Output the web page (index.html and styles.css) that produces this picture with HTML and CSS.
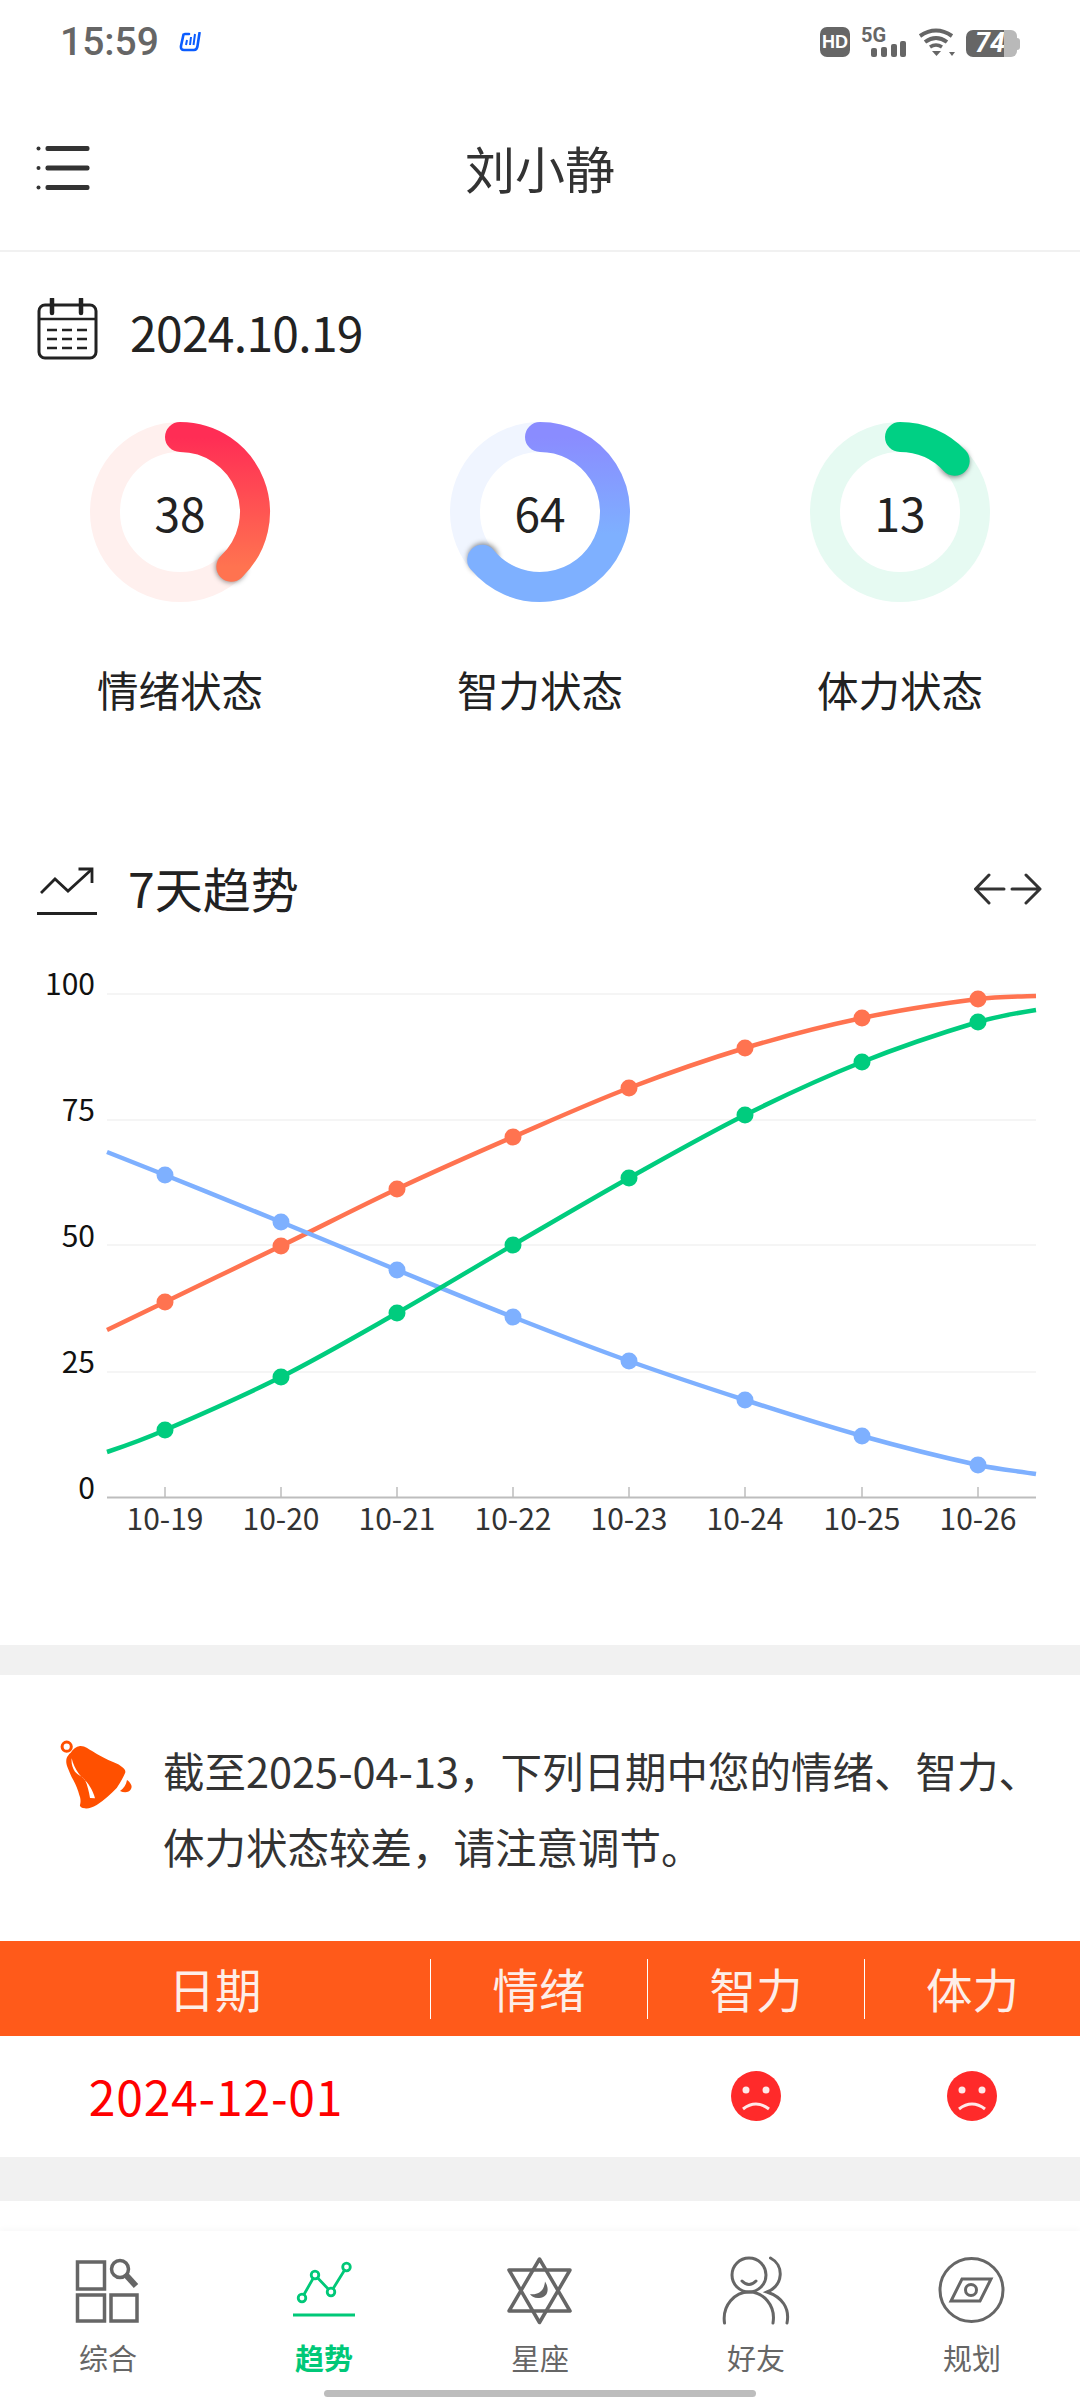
FILE: index.html
```html
<!DOCTYPE html>
<html lang="zh-CN">
<head>
<meta charset="utf-8">
<title>刘小静</title>
<link rel="stylesheet" href="styles.css">
</head>
<body>
<div class="page">
  <div class="statusbar">
    <div class="status-left">
      <span class="clock">15:59</span>
      <svg class="app-glyph" viewBox="0 0 22 20"><path d="M6 2H10M4.500 2.500L2 14Q1.500 18 5 18H15Q18 18 18.500 14L20.500 1" fill="none" stroke="#0a5cff" stroke-width="2.600" stroke-linecap="round"/><path d="M8 8L7 13M12 5L11 13M16 2L14.500 13" fill="none" stroke="#0a5cff" stroke-width="2"/></svg>
    </div>
    <div class="status-right">
      <span class="hd">HD</span>
      <div class="signal">
        <span class="signal-text">5G</span>
        <svg class="signal-bars" viewBox="0 0 46 30"><rect x="10" y="21" width="6" height="9" rx="2"/><rect x="20" y="20" width="6" height="10" rx="2"/><rect x="30" y="17" width="6" height="13" rx="2"/><rect x="39" y="14" width="6" height="16" rx="2"/></svg>
      </div>
      <svg class="wifi" viewBox="0 0 37 30"><path d="M2 9Q18 -2 34 9" fill="none" stroke="#666" stroke-width="4"/><path d="M7 15Q18 7 29 15" fill="none" stroke="#666" stroke-width="4"/><path d="M12 20Q18 16 24 20" fill="none" stroke="#666" stroke-width="3.500"/><path d="M14 24H23L18.500 29Z" fill="#666"/><path d="M31 25H37L34 29Z" fill="#666"/></svg>
      <div class="battery"><span class="bat-fill">74</span><span class="bat-rest"></span><span class="bat-nub"></span></div>
    </div>
  </div>

  <header class="appbar">
    <svg class="menu-icon" viewBox="0 0 54 44"><g fill="#333"><circle cx="2.500" cy="2.500" r="2"/><circle cx="2.500" cy="22" r="2"/><circle cx="2.500" cy="41.500" r="2"/><rect x="9.500" y="0" width="44" height="5" rx="2"/><rect x="9.500" y="19.500" width="44" height="5" rx="2"/><rect x="9.500" y="39" width="44" height="5" rx="2"/></g></svg>
    <h1 class="title">刘小静</h1>
  </header>

  <section class="date-row">
    <svg class="head-icon" viewBox="0 0 62 62"><g fill="none" stroke="#222" stroke-width="3"><rect x="2" y="7" width="57" height="53" rx="6"/><path d="M2 21H59" stroke-width="2.500"/><path d="M15 1V15M44 1V15" stroke-width="4.500" stroke-linecap="round"/><path d="M10 32H20M25 32H35M40 32H50M10 41H20M25 41H35M40 41H50M10 50H20M25 50H35M40 50H50" stroke-width="2.500"/></g></svg>
    <span class="date-text">2024.10.19</span>
  </section>

  <section class="rings">
    <div class="ring-item">
      <div class="ring">
        <svg class="ring-svg" viewBox="0 0 180 180">
          <defs>
            <linearGradient id="g1" x1="0" y1="0" x2="0" y2="1"><stop offset="0" stop-color="#ff2d55"/><stop offset="1" stop-color="#ff7350"/></linearGradient>
            <linearGradient id="g2" x1="0" y1="0" x2="0" y2="1"><stop offset="0" stop-color="#8a8cff"/><stop offset=".65" stop-color="#7eb0ff"/><stop offset="1" stop-color="#7eb0ff"/></linearGradient>
            <filter id="blur" x="-50%" y="-50%" width="200%" height="200%"><feGaussianBlur stdDeviation="2.500"/></filter>
          </defs>
          <circle cx="90" cy="90" r="75" class="track track-red"/>
          <circle cx="141" cy="145" r="15.500" class="cap-shadow" filter="url(#blur)"/>
          <path d="M90 15A75 75 0 0 1 141.300 144.700" class="arc" stroke="url(#g1)"/>
        </svg>
        <span class="ring-num">38</span>
      </div>
      <div class="ring-label">情绪状态</div>
    </div>
    <div class="ring-item">
      <div class="ring">
        <svg class="ring-svg" viewBox="0 0 180 180">
          <circle cx="90" cy="90" r="75" class="track track-blue"/>
          <circle cx="33" cy="136.500" r="15.500" class="cap-shadow" filter="url(#blur)"/>
          <path d="M90 15A75 75 0 1 1 32.200 137.800" class="arc" stroke="url(#g2)"/>
        </svg>
        <span class="ring-num">64</span>
      </div>
      <div class="ring-label">智力状态</div>
    </div>
    <div class="ring-item">
      <div class="ring">
        <svg class="ring-svg" viewBox="0 0 180 180">
          <circle cx="90" cy="90" r="75" class="track track-green"/>
          <circle cx="144" cy="40" r="15.500" class="cap-shadow" filter="url(#blur)"/>
          <path d="M90 15A75 75 0 0 1 144.700 38.700" class="arc arc-green"/>
        </svg>
        <span class="ring-num">13</span>
      </div>
      <div class="ring-label">体力状态</div>
    </div>
  </section>

  <section class="trend-row">
    <div class="trend-left">
      <svg class="trend-icon" viewBox="36 860 62 52"><g fill="none" stroke="#222" stroke-width="2.800"><path d="M41 889L55 875L68 887L91 866"/><path d="M78.500 865H92V879"/><path d="M37 909.500H97" stroke-width="3"/></g></svg>
      <span class="trend-text">7天趋势</span>
    </div>
    <svg class="swap-icon" viewBox="974 867 68 32"><g fill="none" stroke="#333" stroke-width="3" stroke-linecap="round" stroke-linejoin="round"><path d="M989 869L975.500 883L989 897M977 883H1004"/><path d="M1026 869L1040 883L1026 897M1012 883H1038"/></g></svg>
  </section>

  <svg class="chart" viewBox="0 918 1080 727">
    <g class="grid">
      <path d="M107 994H1036M107 1120H1036M107 1245H1036M107 1372H1036"/>
    </g>
    <g class="axis">
      <path d="M107 1497.500H1036"/>
      <path d="M165 1487V1497M281 1487V1497M397 1487V1497M513 1487V1497M629 1487V1497M745 1487V1497M862 1487V1497M978 1487V1497"/>
    </g>
    <g class="y-labels">
      <text x="95" y="995">100</text>
      <text x="95" y="1121">75</text>
      <text x="95" y="1247">50</text>
      <text x="95" y="1373">25</text>
      <text x="95" y="1499">0</text>
    </g>
    <g class="x-labels">
      <text x="165" y="1530">10-19</text>
      <text x="281" y="1530">10-20</text>
      <text x="397" y="1530">10-21</text>
      <text x="513" y="1530">10-22</text>
      <text x="629" y="1530">10-23</text>
      <text x="745" y="1530">10-24</text>
      <text x="862" y="1530">10-25</text>
      <text x="978" y="1530">10-26</text>
    </g>
    <path class="line line-red" d="M107 1330L165 1302C203.700 1283.300 242.300 1264.800 281 1246S358.300 1207.200 397 1189S474.300 1153.800 513 1137S590.300 1102.800 629 1088S706.300 1059.700 745 1048S823.300 1026.200 862 1018S939.300 1003.900 978 999C997 996.600 1017 996.500 1036 996"/>
    <g class="dots-red"><circle cx="165" cy="1302" r="8.500"/><circle cx="281" cy="1246" r="8.500"/><circle cx="397" cy="1189" r="8.500"/><circle cx="513" cy="1137" r="8.500"/><circle cx="629" cy="1088" r="8.500"/><circle cx="745" cy="1048" r="8.500"/><circle cx="862" cy="1018" r="8.500"/><circle cx="978" cy="999" r="8.500"/></g>
    <path class="line line-blue" d="M107 1152L165 1175C203.700 1190.600 242.300 1206.200 281 1222S358.300 1254.200 397 1270S474.300 1301.800 513 1317S590.300 1347.200 629 1361S706.300 1387.500 745 1400S823.300 1425.200 862 1436S939.300 1456.500 978 1465C997 1469.100 1017 1471 1036 1474"/>
    <g class="dots-blue"><circle cx="165" cy="1175" r="8.500"/><circle cx="281" cy="1222" r="8.500"/><circle cx="397" cy="1270" r="8.500"/><circle cx="513" cy="1317" r="8.500"/><circle cx="629" cy="1361" r="8.500"/><circle cx="745" cy="1400" r="8.500"/><circle cx="862" cy="1436" r="8.500"/><circle cx="978" cy="1465" r="8.500"/></g>
    <path class="line line-green" d="M107 1452Q140 1441 165 1430C203.700 1413.300 242.300 1396.500 281 1377S358.300 1335 397 1313S474.300 1267.500 513 1245S590.300 1199.700 629 1178S706.300 1134.300 745 1115S823.300 1077.500 862 1062S939.300 1033.600 978 1022C997 1016.300 1017 1013 1036 1010"/>
    <g class="dots-green"><circle cx="165" cy="1430" r="8.500"/><circle cx="281" cy="1377" r="8.500"/><circle cx="397" cy="1313" r="8.500"/><circle cx="513" cy="1245" r="8.500"/><circle cx="629" cy="1178" r="8.500"/><circle cx="745" cy="1115" r="8.500"/><circle cx="862" cy="1062" r="8.500"/><circle cx="978" cy="1022" r="8.500"/></g>
  </svg>

  <div class="band band-a"></div>

  <section class="notice">
    <svg class="bell" viewBox="60 1740 74 70">
      <circle cx="66.700" cy="1746.700" r="4.600" fill="none" stroke="#ff5000" stroke-width="3"/>
      <path fill="#ff5000" d="M70.700 1752.700C73 1749 76 1746.500 80 1746C85 1745.700 89 1749.500 93.300 1751.700C98 1754.500 103 1757.500 108.300 1760C113 1762 118 1763.500 121.700 1766.700C125 1769 126 1771 125 1773.300C123 1778 120 1783 116.700 1788C111 1794 104 1800.500 96.700 1805C92 1807.500 88 1809 85 1808.300C81 1808 79.500 1806 80 1805C81 1801 80.500 1798 79.300 1795C78 1790 76 1785 73.300 1780C71 1776 69 1771 67.300 1766.700C66 1763 66 1760.500 66.700 1758C67.500 1756 69 1754 70.700 1752.700Z"/>
      <path fill="#fff" d="M71.700 1758.300C73 1764 75.500 1769 78.300 1773C82 1778 87 1781 90 1786.700C92 1790 94 1794 95 1798.300L90 1798C89 1792 87.500 1785 85 1780C82 1776 78 1775 75 1771.700C72.500 1768 71 1763 71.700 1758.300Z"/>
      <path fill="#ff5000" d="M127 1780C130 1782 133 1786 131 1789C129 1793 124 1793 120 1791C124 1788 126 1785 127 1780Z"/>
    </svg>
    <p class="notice-text">截至2025-04-13，下列日期中您的情绪、智力、<br>体力状态较差，请注意调节。</p>
  </section>

  <div class="table-head">
    <div class="th">日期</div>
    <div class="th th-rule">情绪</div>
    <div class="th th-rule">智力</div>
    <div class="th th-rule">体力</div>
  </div>
  <div class="table-row">
    <div class="td-date">2024-12-01</div>
    <div class="td"></div>
    <div class="td"><svg class="face" viewBox="-25 -25 50 50"><circle r="25" fill="#ff2a2a"/><circle cx="-10" cy="-6" r="3.500" fill="#ffe9e9"/><circle cx="10" cy="-6" r="3.500" fill="#ffe9e9"/><path d="M-13 13Q0 3 13 13" fill="none" stroke="#ffe9e9" stroke-width="3"/></svg></div>
    <div class="td"><svg class="face" viewBox="-25 -25 50 50"><circle r="25" fill="#ff2a2a"/><circle cx="-10" cy="-6" r="3.500" fill="#ffe9e9"/><circle cx="10" cy="-6" r="3.500" fill="#ffe9e9"/><path d="M-13 13Q0 3 13 13" fill="none" stroke="#ffe9e9" stroke-width="3"/></svg></div>
  </div>

  <div class="band band-b"></div>
  <div class="filler"></div>

  <nav class="tabbar">
    <div class="tab">
      <svg class="tab-icon" viewBox="68 2255 80 72"><g fill="none" stroke="#666" stroke-width="3.500"><rect x="77.500" y="2262" width="27" height="27"/><rect x="77.500" y="2295" width="27" height="26"/><rect x="111" y="2295" width="26" height="26"/><circle cx="120" cy="2269" r="8.500"/></g><path d="M126 2275L136 2286" stroke="#666" stroke-width="6"/></svg>
      <span class="tab-label">综合</span>
    </div>
    <div class="tab">
      <svg class="tab-icon" viewBox="284 2255 80 72"><g fill="#fff" stroke="#00c878" stroke-width="2.800"><path d="M302 2298L315 2275L331 2292L346.500 2267" fill="none"/><circle cx="302" cy="2298" r="3.800"/><circle cx="315" cy="2275" r="3.800"/><circle cx="331" cy="2292" r="3.800"/><circle cx="346.500" cy="2267" r="3.800"/><path d="M293 2315H355" stroke-width="3.200"/></g></svg>
      <span class="tab-label tab-active">趋势</span>
    </div>
    <div class="tab">
      <svg class="tab-icon" viewBox="500 2255 80 72"><g fill="none" stroke="#666" stroke-width="3.500" stroke-linejoin="round"><path d="M539.500 2259L570 2311H509Z"/><path d="M509 2270H570L539.500 2322.500Z"/></g><path d="M545 2281.500C551 2291 546 2299 538 2298C534 2298 531 2296 530 2294C536 2295 544 2293 545 2281.500Z" fill="#666"/></svg>
      <span class="tab-label">星座</span>
    </div>
    <div class="tab">
      <svg class="tab-icon" viewBox="716 2255 80 72"><g fill="none" stroke="#666" stroke-width="3" stroke-linecap="round"><circle cx="749" cy="2275" r="17"/><path d="M742 2281Q749 2288 756 2281"/><path d="M724.500 2323C722 2305 735 2292 749 2292C763 2292 776 2305 773 2323"/><path d="M770.500 2258C784 2265 784 2285 767 2292C782 2297 790 2308 787 2323"/></g></svg>
      <span class="tab-label">好友</span>
    </div>
    <div class="tab">
      <svg class="tab-icon" viewBox="932 2255 80 72"><g fill="none" stroke="#666" stroke-width="3"><circle cx="971.500" cy="2290" r="31.500"/><path d="M962 2279H991L980 2301H951Z"/><circle cx="971" cy="2290" r="5.500"/></g></svg>
      <span class="tab-label">规划</span>
    </div>
  </nav>
  <div class="home-bar"></div>
</div>
</body>
</html>
```

FILE: styles.css
```css
* { box-sizing: border-box; }
html, body { margin: 0; padding: 0; background: #fff; }
body { font-family: "Noto Sans CJK SC", "Noto Sans", sans-serif; color: #222; }
.page { position: relative; width: 1080px; height: 2400px; overflow: hidden; display: flex; flex-direction: column; }

.statusbar { height: 90px; padding: 27px 60px 0; display: flex; justify-content: space-between; align-items: flex-start; }
.status-left { display: flex; align-items: center; gap: 20px; height: 30px; }
.clock { font-family: Roboto, sans-serif; font-weight: 500; font-size: 39px; line-height: 30px; color: #666; }
.app-glyph { width: 22px; height: 20px; }
.status-right { display: flex; align-items: flex-start; gap: 11px; }
.hd { width: 30px; height: 30px; border-radius: 7px; background: #666; color: #fff; font-family: "Liberation Sans", sans-serif; font-weight: 700; font-size: 18px; line-height: 30px; text-align: center; }
.signal { position: relative; width: 46px; height: 30px; }
.signal-text { position: absolute; left: 0; top: 0; font-family: Roboto, sans-serif; font-weight: 700; font-size: 20px; line-height: 16px; color: #666; }
.signal-bars { display: block; width: 46px; height: 30px; fill: #666; }
.wifi { width: 37px; height: 30px; }
.battery { display: flex; align-items: center; height: 27px; margin-top: 3px; }
.bat-fill { width: 38px; height: 27px; background: #666; border-radius: 7px 0 0 7px; color: #fff; font-family: Roboto, sans-serif; font-weight: 700; font-style: italic; font-size: 27px; line-height: 27px; padding-left: 9px; white-space: nowrap; }
.bat-rest { width: 13px; height: 27px; background: #b9b9b9; border-radius: 0 6px 6px 0; }
.bat-nub { width: 3px; height: 12px; background: #b9b9b9; border-radius: 0 3px 3px 0; }

.appbar { position: relative; height: 162px; border-bottom: 2px solid #f1f1f1; display: flex; align-items: center; justify-content: center; }
.menu-icon { position: absolute; left: 36px; top: 56px; width: 54px; height: 44px; }
.title { margin: 0 0 7px; font-size: 50px; font-weight: 400; line-height: 60px; color: #333; }

.date-row { margin-top: 46px; height: 62px; padding-left: 37px; display: flex; align-items: center; gap: 31px; }
.head-icon { width: 62px; height: 62px; }
.date-text { font-size: 48px; letter-spacing: -0.7px; line-height: 62px; margin-top: 3px; color: #222; }

.rings { margin-top: 62px; display: grid; grid-template-columns: repeat(3, 360px); }
.ring-item { display: flex; flex-direction: column; align-items: center; }
.ring { position: relative; width: 180px; height: 180px; display: flex; align-items: center; justify-content: center; }
.ring-svg { position: absolute; left: 0; top: 0; width: 180px; height: 180px; overflow: visible; }
.ring-num { position: relative; font-size: 46px; line-height: 60px; color: #222; }
.track { fill: none; stroke-width: 30; }
.track-red { stroke: #fff0ee; }
.track-blue { stroke: #f0f5ff; }
.track-green { stroke: #e6faf2; }
.arc { fill: none; stroke-width: 30; stroke-linecap: round; }
.arc-green { stroke: #00d084; }
.cap-shadow { fill: rgba(0, 0, 0, .42); }
.ring-label { margin-top: 57px; font-size: 41.500px; line-height: 60px; color: #222; }

.trend-row { margin-top: 139px; height: 60px; padding: 0 38px 0 36px; display: flex; align-items: center; justify-content: space-between; }
.trend-left { display: flex; align-items: center; gap: 30px; }
.trend-icon { width: 62px; height: 52px; margin-top: 3px; }
.trend-text { font-size: 48px; line-height: 60px; margin-top: -3px; color: #222; }
.swap-icon { width: 68px; height: 32px; margin-top: 1px; }

.chart { display: block; width: 1080px; height: 727px; }
.grid path { stroke: #f5f5f5; stroke-width: 2; fill: none; }
.axis path { stroke: #bdbdbd; stroke-width: 1.500; fill: none; }
.axis path:first-child { stroke-width: 2; }
.y-labels text { font-size: 30px; text-anchor: end; fill: #111; }
.x-labels text { font-size: 30px; text-anchor: middle; fill: #333; }
.line { fill: none; stroke-width: 4.500; }
.line-red { stroke: #ff7350; }
.line-blue { stroke: #7eb0ff; }
.line-green { stroke: #00cc7e; }
.dots-red { fill: #ff7350; }
.dots-blue { fill: #7eb0ff; }
.dots-green { fill: #00cc7e; }

.band { background: #f1f1f1; }
.band-a { height: 30px; }
.band-b { height: 44px; }
.filler { height: 30px; }

.notice { height: 266px; padding: 57px 40px 0 60px; display: flex; align-items: flex-start; gap: 29px; }
.bell { width: 74px; height: 70px; margin-top: 8px; flex: none; }
.notice-text { margin: 0; font-size: 41.500px; line-height: 76px; color: #333; white-space: nowrap; }

.table-head { height: 95px; background: #ff5a1a; display: grid; grid-template-columns: 430px 217px 217px 216px; align-items: center; }
.th { height: 60px; font-size: 46.500px; line-height: 58px; text-align: center; color: #fdeee8; }
.th-rule { border-left: 1px solid #fff; }
.table-row { height: 121px; display: grid; grid-template-columns: 432px 216px 216px 216px; align-items: center; }
.td-date { text-align: center; font-size: 48px; letter-spacing: 0.8px; line-height: 60px; margin-top: -3px; color: #f00; }
.td { display: flex; justify-content: center; margin-top: -2px; }
.face { width: 50px; height: 50px; }

.tabbar { height: 169px; padding-top: 24px; display: grid; grid-template-columns: repeat(5, 216px); box-shadow: 0 -2px 6px rgba(0, 0, 0, .03); }
.tab { display: flex; flex-direction: column; align-items: center; }
.tab-icon { width: 80px; height: 72px; }
.tab-label { margin-top: 10px; font-size: 29px; line-height: 40px; color: #666; }
.tab-active { color: #00c878; font-weight: 700; }
.home-bar { position: absolute; left: 324px; bottom: 3px; width: 432px; height: 7px; border-radius: 4px; background: #bdbdbd; }
```
